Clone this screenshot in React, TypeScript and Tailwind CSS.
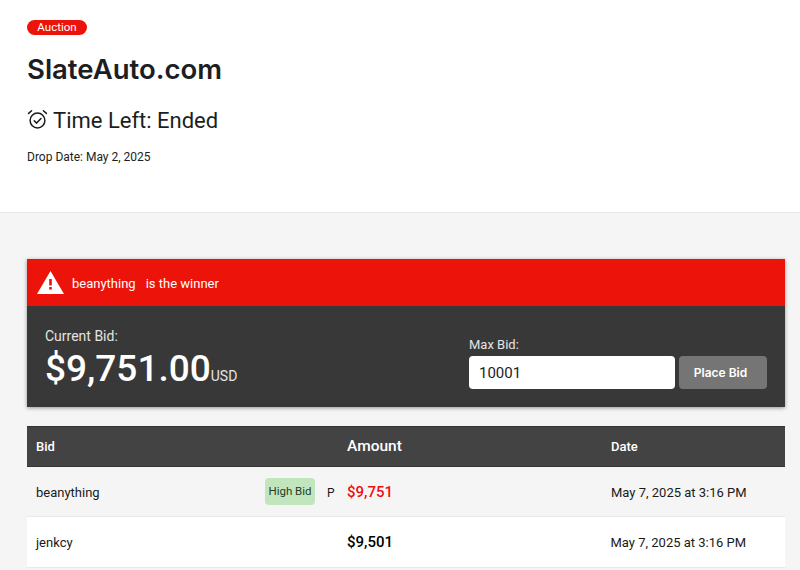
import React from "react";

function AlarmIcon() {
  return (
    <svg width="22" height="22" viewBox="0 0 22 22" fill="none" stroke="#1a1a1a" strokeWidth="1.5" strokeLinecap="round" strokeLinejoin="round">
      <circle cx="10.5" cy="11.5" r="7.4" />
      <path d="M7.2 11.7l2.4 2.4 4.4-4.6" />
      <path d="M1.6 4.4L4.6 1.8" />
      <path d="M19.4 4.4L16.4 1.8" />
    </svg>
  );
}

function WarnIcon() {
  return (
    <svg width="27" height="23" viewBox="0 0 27 23">
      <path d="M13.5 0L27 23H0Z" fill="#fff" />
      <rect x="12.2" y="8" width="2.6" height="6.5" fill="#ec130a" />
      <rect x="12.2" y="16" width="2.6" height="2.6" fill="#ec130a" />
    </svg>
  );
}

export default function App() {
  return (
    <div className="h-[570px] w-[800px] overflow-hidden bg-[#f5f5f5] font-['Roboto',sans-serif]">
      <header className="h-[213px] border-b border-[#e8e8e8] bg-white pl-[27px] pt-[20px]">
        <div className="flex h-[15px] w-[60px] items-center justify-center rounded-full bg-[#ec130a] text-[11.5px] font-normal leading-none text-white">
          Auction
        </div>
        <h1 className="mt-[14px] font-['Inter',sans-serif] text-[27.5px] font-semibold leading-[40px] text-[#1c1e21]">
          SlateAuto.com
        </h1>
        <div className="mt-[16px] flex h-[30px] items-center gap-[4px]">
          <AlarmIcon />
          <span className="pt-[1px] text-[22px] font-normal text-[#1c1e21]">Time Left: Ended</span>
        </div>
        <p className="mt-[15px] text-[12px] leading-[15px] text-[#1c1e21]">Drop Date: May 2, 2025</p>
      </header>

      <section className="ml-[27px] mr-[15px] mt-[46px] shadow-[0_1px_4px_rgba(0,0,0,0.4)]">
        <div className="flex h-[47px] items-center bg-[#ec130a] pl-[10px] text-[13px] font-normal text-white">
          <WarnIcon />
          <span className="ml-[8px] pt-[2px]">beanything</span>
          <span className="ml-[10px] pt-[2px]">is the winner</span>
        </div>
        <div className="flex h-[101px] items-start justify-between bg-[#383838] pl-[18px] pr-[18px]">
          <div className="pt-[21px]">
            <div className="text-[14px] leading-[18px] text-[#e4e4e4]">Current Bid:</div>
            <div className="mt-[1px] flex items-baseline text-white">
              <span className="text-[37px] font-medium leading-[46px]">$9,751.00</span>
              <span className="text-[14px] text-[#e4e4e4]">USD</span>
            </div>
          </div>
          <div className="pt-[30px]">
            <div className="text-[13px] leading-[18px] text-[#e4e4e4]">Max Bid:</div>
            <div className="mt-[2px] flex gap-[4px]">
              <input
                readOnly
                value="10001"
                className="h-[33px] w-[206px] rounded-[4px] bg-white px-[10px] text-[15px] text-[#222] outline-none"
              />
              <button className="h-[33px] w-[88px] rounded-[4px] bg-[#757575] pr-[5px] pt-[1px] font-['Inter',sans-serif] text-[12px] font-semibold text-white">
                Place Bid
              </button>
            </div>
          </div>
        </div>
      </section>

      <section className="ml-[27px] mr-[15px] mt-[19px]">
        <div className="flex h-[41px] items-center border-b border-t border-[#333] bg-[#434343] text-white">
          <span className="w-[320px] pl-[9px] text-[13px] font-medium">Bid</span>
          <span className="w-[264px] text-[15.5px] font-medium">Amount</span>
          <span className="text-[13px] font-medium">Date</span>
        </div>
        <div className="flex h-[50px] items-center border-b border-[#eaeaea] bg-[#f5f5f5] pt-[2px] text-[#1a1a1a]">
          <span className="w-[238px] pl-[9px] text-[13px]">beanything</span>
          <span className="-mt-[2px] flex h-[27px] w-[50px] items-center justify-center rounded-[4px] bg-[#c1e6bd] text-[11.5px] text-[#2a3a2a]">
            High Bid
          </span>
          <span className="ml-[12px] w-[20px] text-[12px]">P</span>
          <span className="w-[264px] text-[15px] font-medium text-[#ee0f0f]">$9,751</span>
          <span className="text-[13px]">May 7, 2025 at 3:16 PM</span>
        </div>
        <div className="flex h-[51px] items-center border-b border-[#eaeaea] bg-white pt-[1px] text-[#1a1a1a]">
          <span className="w-[320px] pl-[9px] text-[13px]">jenkcy</span>
          <span className="w-[263.5px] text-[15px] font-medium text-black">$9,501</span>
          <span className="text-[13px]">May 7, 2025 at 3:16 PM</span>
        </div>
      </section>
    </div>
  );
}
